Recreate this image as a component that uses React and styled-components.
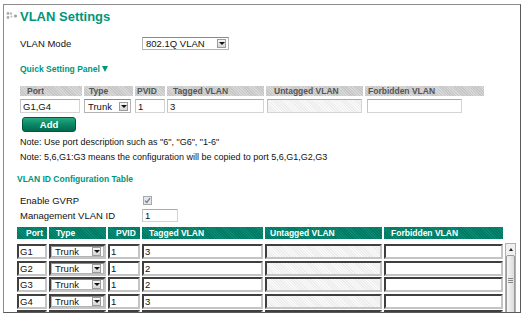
import { Fragment } from 'react'
import styled, { createGlobalStyle } from 'styled-components'

const GlobalStyle = createGlobalStyle`
  html, body { margin: 0; padding: 0; background: #fff; }
  body { font-family: 'Liberation Sans', Arial, sans-serif; font-size: 9.5px; color: #111; }
`

const hatchLight = 'repeating-linear-gradient(45deg, #ededed 0 1px, #f9f9f9 1px 2px)'

const Frame = styled.div`
  box-sizing: border-box;
  width: 518px;
  height: 309px;
  margin: 4px 0 0 3px;
  border: 1px solid #8c8c8c;
  border-right-color: #5a5a5a;
  border-bottom-color: #5a5a5a;
  overflow: hidden;
`

const Title = styled.h1`
  display: flex;
  align-items: center;
  gap: 2px;
  height: 22px;
  margin: 0;
  padding-left: 2px;
  font-size: 13px;
  font-weight: bold;
  color: #00967a;
`

const FieldRow = styled.div`
  display: flex;
  align-items: center;
  height: 14px;
  margin-top: ${p => p.$mt || 0}px;
  padding-left: 16px;
`

const Label = styled.span`
  width: 122px;
  flex: none;
`

const Select = styled.div`
  box-sizing: border-box;
  display: flex;
  align-items: center;
  justify-content: space-between;
  width: ${p => (p.$w ? `${p.$w}px` : '100%')};
  height: ${p => p.$h || 13}px;
  padding: 0 2px 0 3px;
  border: 1px solid #b4b4b4;
  border-top-color: #8a8a8a;
  background: #fff;
`

const DropBtn = styled.span`
  box-sizing: border-box;
  display: flex;
  align-items: center;
  justify-content: center;
  width: 9px;
  height: 9px;
  border: 1px solid #9c9c9c;
  background: linear-gradient(#f6f6f6, #d6d6d6);
  &::after {
    content: '';
    border-left: 3px solid transparent;
    border-right: 3px solid transparent;
    border-top: 3px solid #111;
  }
`

const SectionTitle = styled.div`
  display: flex;
  align-items: center;
  gap: 2px;
  height: 12px;
  margin-top: ${p => p.$mt}px;
  padding-left: ${p => p.$pl}px;
  font-size: 8.5px;
  font-weight: bold;
  color: #00967a;
`

const DownMark = styled.span`
  border-left: 3.5px solid transparent;
  border-right: 3.5px solid transparent;
  border-top: 6px solid #00967a;
`

const QuickGrid = styled.div`
  display: grid;
  grid-template-columns: 62px 49px 30px 97px 97px 119px;
  column-gap: 2px;
  margin: 11px 0 0 16px;
`

const GrayHead = styled.div`
  height: 10px;
  line-height: 10px;
  padding-left: ${p => p.$pl || 5}px;
  font-size: 8.5px;
  font-weight: bold;
  color: #555;
  background: repeating-linear-gradient(45deg, #c6c6c6 0 1px, #d8d8d8 1px 2px);
`

const TextBox = styled.input`
  box-sizing: border-box;
  width: ${p => (p.$w ? `${p.$w}px` : '100%')};
  height: 14px;
  margin: 3px 0 0 ${p => p.$ml || 0}px;
  padding: 0 0 0 2px;
  border: 1px solid #d4d4d4;
  border-top-color: #ababab;
  border-left-color: #c4c4c4;
  font: inherit;
  color: #111;
  outline: none;
  background: ${p => (p.$off ? hatchLight : '#fff')};
`

const SelectWrap = styled.div`
  margin-top: 3px;
`

const AddButton = styled.button`
  display: block;
  box-sizing: border-box;
  width: 54px;
  height: 15px;
  margin: 4px 0 0 18px;
  padding: 0;
  border: 1px solid #00583f;
  border-radius: 3px;
  background: linear-gradient(#2aa985, #0a8764 50%, #006b4e);
  color: #fff;
  font: bold 9.5px 'Liberation Sans', Arial, sans-serif;
`

const Notes = styled.div`
  margin-top: 3px;
  padding-left: 16px;
  font-size: 9px;
  line-height: 15px;
`

const CheckBox = styled.span`
  box-sizing: border-box;
  display: flex;
  align-items: center;
  justify-content: center;
  width: 9px;
  height: 9px;
  margin-left: 1px;
  border: 1px solid #a8a8a8;
  background: #e6e6e6;
`

const SmallInput = styled(TextBox)`
  width: 36px;
  height: 13px;
  margin: 0;
`

const columns = '30px 57px 32px 121px 117px 119px'

const TableHead = styled.div`
  display: grid;
  grid-template-columns: ${columns};
  column-gap: 2px;
  margin: 5px 0 0 13px;
`

const TealHead = styled.div`
  height: 12px;
  line-height: 12px;
  padding-left: ${p => p.$pl || 6}px;
  font-size: 8.5px;
  font-weight: bold;
  color: #fff;
  white-space: nowrap;
  background: repeating-linear-gradient(45deg, #007862 0 1px, #0b8a73 1px 2px);
`

const BodyWrap = styled.div`
  display: flex;
  height: 80px;
  margin: 3px 0 0 13px;
`

const RowsArea = styled.div`
  width: 488px;
  overflow: hidden;
`

const BodyGrid = styled.div`
  display: grid;
  grid-template-columns: ${columns};
  grid-auto-rows: 15px;
  column-gap: 2px;
  row-gap: 1.5px;
  padding-top: 2px;
`

const Cell = styled.div`
  box-sizing: border-box;
  display: flex;
  align-items: center;
  padding-left: ${p => (p.$pad === undefined ? 1 : p.$pad)}px;
  border: 2px solid;
  border-color: #3f3f3f #c4c4c4 #c4c4c4 #3f3f3f;
  background: ${p => (p.$off ? hatchLight : '#fff')};
`

const ScrollBar = styled.div`
  box-sizing: border-box;
  display: flex;
  flex-direction: column;
  width: 11px;
  margin-top: 1px;
  border: 1px solid #b0b0b0;
  background: #f0f0f0;
`

const ScrollUp = styled.div`
  display: flex;
  align-items: center;
  justify-content: center;
  height: 11px;
  flex: none;
  &::after {
    content: '';
    border-left: 2.5px solid transparent;
    border-right: 2.5px solid transparent;
    border-bottom: 3px solid #222;
  }
`

const Thumb = styled.div`
  flex: 1;
  display: flex;
  justify-content: center;
  padding-top: 22px;
  border: 1px solid #9a9a9a;
  border-radius: 2px;
  background: linear-gradient(90deg, #f6f6f6, #dcdcdc);
`

const Grip = styled.span`
  width: 5px;
  height: 5px;
  background: repeating-linear-gradient(#888 0 1px, transparent 1px 2px);
`

const rows = [
  ['G1', '1', '3'],
  ['G2', '1', '2'],
  ['G3', '1', '2'],
  ['G4', '1', '3'],
]

function DotsIcon() {
  return (
    <svg width='12' height='10' viewBox='0 0 12 10'>
      <circle cx='2' cy='2.5' r='1.4' fill='#aaa' />
      <circle cx='5' cy='2.5' r='1.2' fill='#bbb' />
      <circle cx='2' cy='6.5' r='1.4' fill='#aaa' />
      <circle cx='5.5' cy='5.5' r='1.1' fill='#c0c0c0' />
      <circle cx='9.5' cy='5' r='1.6' fill='#a0a0a0' />
    </svg>
  )
}

export default function App() {
  return (
    <>
      <GlobalStyle />
      <Frame>
        <Title>
          <DotsIcon />
          VLAN Settings
        </Title>

        <FieldRow $mt={9}>
          <Label>VLAN Mode</Label>
          <Select $w={87}>
            <span>802.1Q VLAN</span>
            <DropBtn />
          </Select>
        </FieldRow>

        <SectionTitle $mt={13} $pl={16}>
          Quick Setting Panel
          <DownMark />
        </SectionTitle>

        <QuickGrid>
          <GrayHead $pl={7}>Port</GrayHead>
          <GrayHead>Type</GrayHead>
          <GrayHead $pl={2}>PVID</GrayHead>
          <GrayHead $pl={6}>Tagged VLAN</GrayHead>
          <GrayHead $pl={8}>Untagged VLAN</GrayHead>
          <GrayHead $pl={3}>Forbidden VLAN</GrayHead>
          <TextBox $w={60} defaultValue='G1,G4' readOnly />
          <SelectWrap>
            <Select $w={47} $h={14}>
              <span>Trunk</span>
              <DropBtn />
            </Select>
          </SelectWrap>
          <TextBox defaultValue='1' readOnly />
          <TextBox defaultValue='3' readOnly />
          <TextBox $w={95} $ml={1} $off readOnly />
          <TextBox $w={95} $ml={2} readOnly />
        </QuickGrid>

        <AddButton>Add</AddButton>

        <Notes>
          <div>Note: Use port description such as "6", "G6", "1-6"</div>
          <div>Note: 5,6,G1:G3 means the configuration will be copied to port 5,6,G1,G2,G3</div>
        </Notes>

        <SectionTitle $mt={8} $pl={13}>VLAN ID Configuration Table</SectionTitle>

        <FieldRow $mt={8}>
          <Label>Enable GVRP</Label>
          <CheckBox>
            <svg width='7' height='7' viewBox='0 0 7 7'>
              <path d='M1 3.6 L2.8 5.4 L6 1.2' stroke='#6b7fa0' strokeWidth='1.3' fill='none' />
            </svg>
          </CheckBox>
        </FieldRow>

        <FieldRow $mt={1}>
          <Label>Management VLAN ID</Label>
          <SmallInput defaultValue='1' readOnly />
        </FieldRow>

        <TableHead>
          <TealHead $pl={9}>Port</TealHead>
          <TealHead $pl={7}>Type</TealHead>
          <TealHead $pl={8}>PVID</TealHead>
          <TealHead $pl={7}>Tagged VLAN</TealHead>
          <TealHead $pl={5}>Untagged VLAN</TealHead>
          <TealHead $pl={7}>Forbidden VLAN</TealHead>
        </TableHead>

        <BodyWrap>
          <RowsArea>
            <BodyGrid>
              {rows.map(([port, pvid, tagged]) => (
                <Fragment key={port}>
                  <Cell>{port}</Cell>
                  <Cell $pad={0}>
                    <Select $h={11}>
                      <span>Trunk</span>
                      <DropBtn />
                    </Select>
                  </Cell>
                  <Cell>{pvid}</Cell>
                  <Cell>{tagged}</Cell>
                  <Cell $off />
                  <Cell />
                </Fragment>
              ))}
              <Cell />
              <Cell />
              <Cell />
              <Cell />
              <Cell $off />
              <Cell />
            </BodyGrid>
          </RowsArea>
          <ScrollBar>
            <ScrollUp />
            <Thumb>
              <Grip />
            </Thumb>
          </ScrollBar>
        </BodyWrap>
      </Frame>
    </>
  )
}
